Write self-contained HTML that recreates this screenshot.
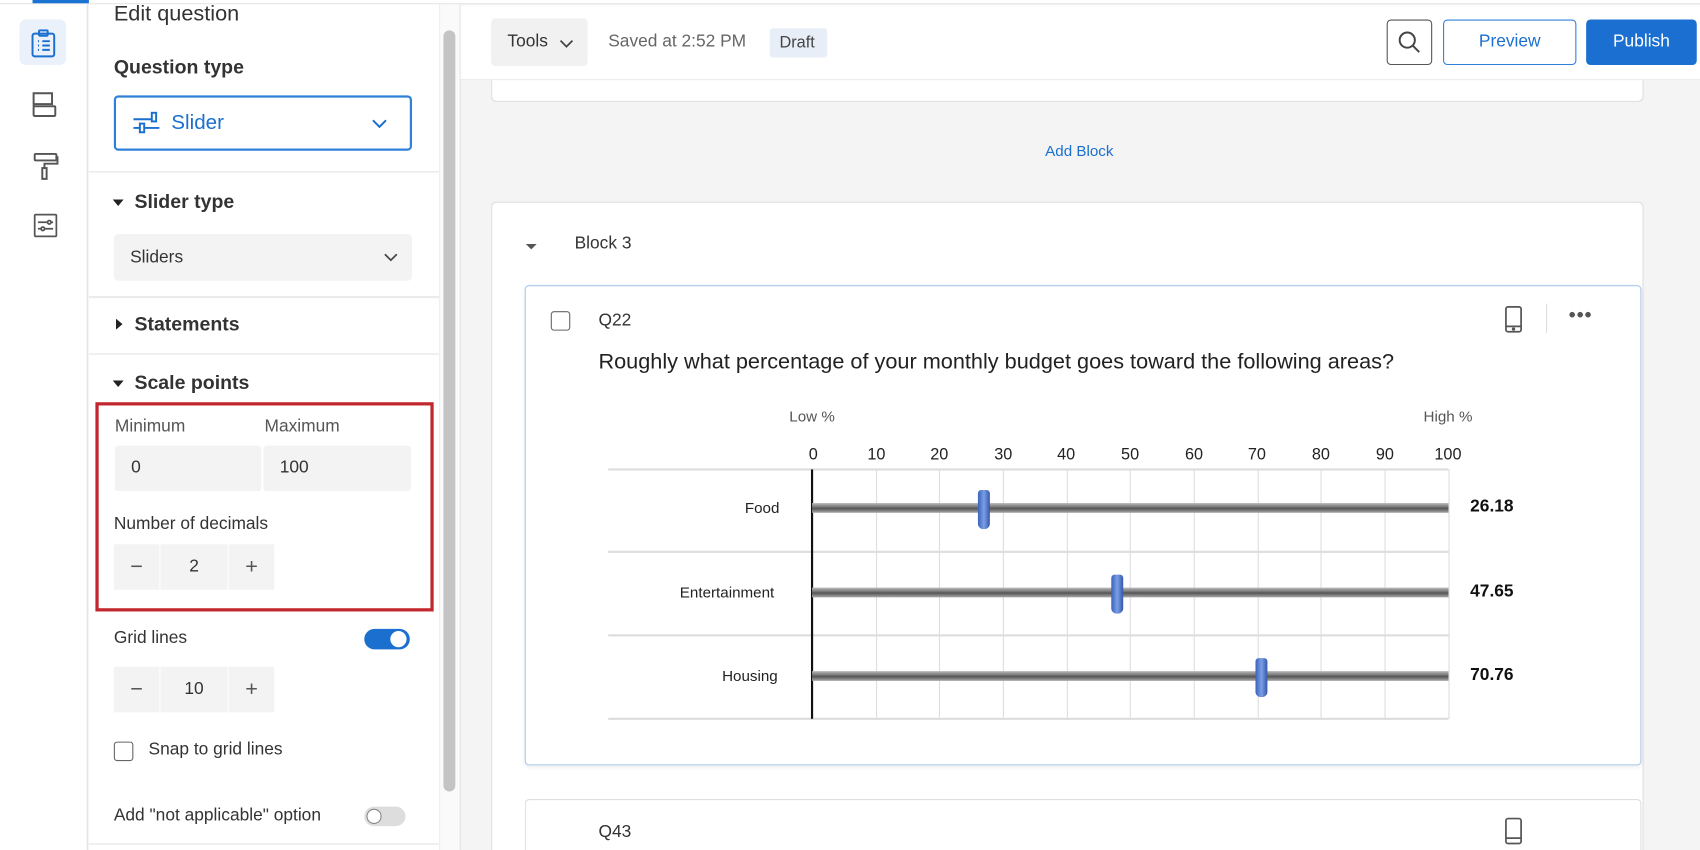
<!DOCTYPE html>
<html><head><meta charset="utf-8"><style>
*{box-sizing:border-box;margin:0;padding:0}
html,body{width:1700px;height:850px;overflow:hidden;background:#f4f4f4}
#w{position:absolute;left:0;top:0;width:1568px;height:784px;overflow:hidden;transform:scale(1.08418,1.08418);transform-origin:0 0;font-family:"Liberation Sans",sans-serif;color:#222;background:#f4f4f4}
.a{position:absolute}
.t{position:absolute;white-space:nowrap}
.b{font-weight:bold}
.gl{position:absolute;top:433px;height:230px;width:1px;background:#ddd}
.hl{position:absolute;left:561px;width:775px;height:2px;background:#ddd}
.bar{position:absolute;left:749px;width:587px;height:9px;background:linear-gradient(#bbb,#777 40%,#555 55%,#aaa);}
.th{position:absolute;width:11px;height:36px;border-radius:3px 3px 5px 5px;background:linear-gradient(90deg,#3a62b8,#7a9ee6 50%,#3458a8)}
.cell{position:absolute;background:#f3f3f3;height:42px;top:0;text-align:center;line-height:42px;font-size:16px;color:#333}
</style></head><body><div id="w">
<div class="a" style="left:0;top:0;width:1568px;height:4px;background:#fff;border-bottom:1px solid #e3e3e3"></div>
<div class="a" style="left:0;top:4px;width:81px;height:780px;background:#fff;border-right:1px solid #e0e0e0"></div>
<div class="a" style="left:30px;top:0;width:52px;height:3px;background:#1a73d1"></div>
<div class="a" style="left:18px;top:18px;width:43px;height:42px;border-radius:6px;background:#eaf1fb"></div>
<svg class="a" style="left:28px;top:27px" width="24" height="26" viewBox="0 0 24 26" fill="none" stroke="#1a6fcf" stroke-width="1.8"><rect x="2" y="4" width="20" height="21" rx="2"/><rect x="8" y="1" width="8" height="5" rx="1"/><path d="M7 11h1M11 11h7M7 15h1M11 15h7M7 19h1M11 19h7"/></svg>
<svg class="a" style="left:28px;top:83px" width="25" height="26" viewBox="0 0 25 26" fill="none" stroke="#555" stroke-width="1.8"><path d="M3 13V3h17v10H3"/><rect x="3" y="15" width="20" height="9" rx="1"/><path d="M3 13v2"/></svg>
<svg class="a" style="left:30px;top:140px" width="25" height="27" viewBox="0 0 25 27" fill="none" stroke="#555" stroke-width="1.8"><rect x="2" y="2" width="20" height="6" rx="1"/><path d="M22 5h1v6H11v4"/><rect x="9" y="15" width="4" height="10"/></svg>
<svg class="a" style="left:30px;top:196px" width="24" height="24" viewBox="0 0 24 24" fill="none" stroke="#555" stroke-width="1.6"><rect x="2" y="2" width="20" height="20" rx="1"/><path d="M5 9h9M17 9h2M5 15h3M11 15h8"/><circle cx="15.5" cy="9" r="1.6"/><circle cx="9.5" cy="15" r="1.6"/></svg>
<div class="a" style="left:82px;top:4px;width:323px;height:780px;background:#fff"></div>
<div class="t" style="left:105px;top:2px;font-size:20px;color:#333">Edit question</div>
<div class="t b" style="left:105px;top:52px;font-size:18px;color:#333">Question type</div>
<div class="a" style="left:105px;top:88px;width:275px;height:51px;border:2px solid #2f80d8;border-radius:4px"></div>
<svg class="a" style="left:123px;top:103px" width="25" height="22" viewBox="0 0 25 22" fill="none" stroke="#1a6fcf" stroke-width="1.8"><path d="M0 7h18M0 15h24"/><rect x="17" y="1" width="4" height="8" fill="#fff"/><rect x="6" y="11" width="4" height="8" fill="#fff"/></svg>
<div class="t" style="left:158px;top:103px;font-size:19px;color:#1a6fcf">Slider</div>
<svg class="a" style="left:343px;top:109px" width="14" height="10" viewBox="0 0 14 10" fill="none" stroke="#1a6fcf" stroke-width="1.8"><path d="M1 2l6 6 6-6"/></svg>
<div class="a" style="left:82px;top:158px;width:323px;height:1px;background:#e3e3e3"></div>
<div class="a" style="left:104px;top:184px;border:5px solid transparent;border-top:6px solid #222"></div>
<div class="t b" style="left:124px;top:176px;font-size:18px;color:#333">Slider type</div>
<div class="a" style="left:105px;top:216px;width:275px;height:43px;background:#f3f3f3;border-radius:4px"></div>
<div class="t" style="left:120px;top:229px;font-size:16px;color:#333">Sliders</div>
<svg class="a" style="left:354px;top:233px" width="13" height="9" viewBox="0 0 13 9" fill="none" stroke="#444" stroke-width="1.6"><path d="M1 1.5l5.5 5.5 5.5-5.5"/></svg>
<div class="a" style="left:82px;top:273px;width:323px;height:2px;background:#ebebeb"></div>
<div class="a" style="left:107px;top:294px;border:5px solid transparent;border-left:6px solid #222"></div>
<div class="t b" style="left:124px;top:289px;font-size:18px;color:#333">Statements</div>
<div class="a" style="left:82px;top:326px;width:323px;height:1px;background:#e3e3e3"></div>
<div class="a" style="left:104px;top:351px;border:5px solid transparent;border-top:6px solid #222"></div>
<div class="t b" style="left:124px;top:343px;font-size:18px;color:#333">Scale points</div>
<div class="a" style="left:88px;top:371px;width:312px;height:193px;border:3px solid #c1272d"></div>
<div class="t" style="left:106px;top:385px;font-size:16px;color:#555">Minimum</div>
<div class="t" style="left:244px;top:385px;font-size:16px;color:#555">Maximum</div>
<div class="a" style="left:106px;top:411px;width:135px;height:42px;background:#f3f3f3;border-radius:3px"></div>
<div class="a" style="left:243px;top:411px;width:136px;height:42px;background:#f3f3f3;border-radius:3px"></div>
<div class="t" style="left:121px;top:423px;font-size:16px;color:#333">0</div>
<div class="t" style="left:258px;top:423px;font-size:16px;color:#333">100</div>
<div class="t" style="left:105px;top:475px;font-size:16px;color:#333">Number of decimals</div>
<div class="a" style="left:105px;top:502px;width:148px;height:42px">
<div class="cell" style="left:0;width:42px;font-size:20px;color:#555">−</div><div class="cell" style="left:43px;width:62px">2</div><div class="cell" style="left:106px;width:42px;font-size:20px;color:#555">+</div></div>
<div class="t" style="left:105px;top:580px;font-size:16px;color:#333">Grid lines</div>
<div class="a" style="left:336px;top:580px;width:42px;height:19px;border-radius:10px;background:#1a6fcf"></div>
<div class="a" style="left:360px;top:582px;width:15px;height:15px;border-radius:50%;background:#fff"></div>
<div class="a" style="left:105px;top:615px;width:148px;height:42px">
<div class="cell" style="left:0;width:42px;font-size:20px;color:#555">−</div><div class="cell" style="left:43px;width:62px">10</div><div class="cell" style="left:106px;width:42px;font-size:20px;color:#555">+</div></div>
<div class="a" style="left:105px;top:684px;width:18px;height:18px;border:1.5px solid #666;border-radius:3px"></div>
<div class="t" style="left:137px;top:683px;font-size:16px;color:#333">Snap to grid lines</div>
<div class="t" style="left:105px;top:744px;font-size:16px;color:#333">Add "not applicable" option</div>
<div class="a" style="left:336px;top:744px;width:38px;height:18px;border-radius:9px;background:#ddd"></div>
<div class="a" style="left:338px;top:746px;width:14px;height:14px;border-radius:50%;background:#fff;border:1px solid #888"></div>
<div class="a" style="left:82px;top:778px;width:323px;height:1px;background:#e3e3e3"></div>
<div class="a" style="left:405px;top:4px;width:20px;height:780px;background:#fafafa;border-left:1px solid #eee;border-right:1px solid #e3e3e3"></div>
<div class="a" style="left:409px;top:28px;width:11px;height:702px;border-radius:6px;background:#c4c4c4"></div>
<div class="a" style="left:425px;top:5px;width:1143px;height:69px;background:#fff;border-bottom:1px solid #eaeaea"></div>
<div class="a" style="left:453px;top:17px;width:89px;height:44px;background:#f1f1f1;border-radius:4px"></div>
<div class="t" style="left:468px;top:30px;font-size:16px;color:#333">Tools</div>
<svg class="a" style="left:516px;top:36px" width="13" height="9" viewBox="0 0 13 9" fill="none" stroke="#444" stroke-width="1.6"><path d="M1 1.5l5.5 5.5 5.5-5.5"/></svg>
<div class="t" style="left:561px;top:30px;font-size:16px;color:#666">Saved at 2:52 PM</div>
<div class="a" style="left:710px;top:26px;width:53px;height:27px;background:#e8eef7;border-radius:3px"></div>
<div class="t" style="left:719px;top:31px;font-size:15px;color:#444">Draft</div>
<div class="a" style="left:1279px;top:18px;width:42px;height:42px;border:1.5px solid #555;border-radius:4px"></div>
<svg class="a" style="left:1288px;top:27px" width="24" height="24" viewBox="0 0 24 24" fill="none" stroke="#444" stroke-width="1.8"><circle cx="10" cy="10" r="7"/><path d="M15 15l6 6"/></svg>
<div class="a" style="left:1331px;top:18px;width:123px;height:42px;border:1.5px solid #2f80d8;border-radius:4px;text-align:center;line-height:40px;font-size:16px;color:#1a6fcf">Preview</div>
<div class="a" style="left:1463px;top:18px;width:102px;height:42px;background:#1a6fd1;border-radius:4px;text-align:center;line-height:42px;font-size:16px;color:#fff">Publish</div>
<div class="a" style="left:453px;top:74px;width:1063px;height:20px;background:#fff;border:1px solid #ddd;border-top:none;border-radius:0 0 5px 5px"></div>
<div class="t" style="left:964px;top:131px;font-size:14px;color:#1a6fcf">Add Block</div>
<div class="a" style="left:453px;top:186px;width:1063px;height:598px;background:#fff;border:1px solid #ddd;border-bottom:none;border-radius:5px 5px 0 0"></div>
<div class="a" style="left:485px;top:225px;border:5px solid transparent;border-top:5px solid #555"></div>
<div class="t" style="left:530px;top:216px;font-size:16px;color:#333">Block 3</div>
<div class="a" style="left:484px;top:263px;width:1030px;height:443px;border:1.5px solid #a9c8ec;border-radius:4px;box-shadow:0 1px 4px rgba(0,0,0,.08)"></div>
<div class="a" style="left:508px;top:287px;width:18px;height:18px;border:1.5px solid #666;border-radius:3px"></div>
<div class="t" style="left:552px;top:287px;font-size:16px;color:#333">Q22</div>
<svg class="a" style="left:1387px;top:282px" width="18" height="26" viewBox="0 0 18 26" fill="none" stroke="#555" stroke-width="1.6"><rect x="2" y="1" width="14" height="23" rx="2"/><path d="M2 19h14"/><circle cx="9" cy="21.5" r=".8" fill="#555"/></svg>
<div class="a" style="left:1426px;top:280px;width:1px;height:27px;background:#ddd"></div>
<div class="t b" style="left:1447px;top:280px;font-size:18px;color:#555;letter-spacing:1px">•••</div>
<div class="t" style="left:552px;top:323px;font-size:20px;color:#222">Roughly what percentage of your monthly budget goes toward the following areas?</div>
<div class="t" style="left:728px;top:376px;font-size:14px;color:#555">Low %</div>
<div class="t" style="left:1313px;top:376px;font-size:14px;color:#555">High %</div>
<div class="t" style="left:746px;top:411px;font-size:15px;color:#222">0</div>
<div class="t" style="left:800px;top:411px;font-size:15px;color:#222">10</div>
<div class="t" style="left:858px;top:411px;font-size:15px;color:#222">20</div>
<div class="t" style="left:917px;top:411px;font-size:15px;color:#222">30</div>
<div class="t" style="left:975px;top:411px;font-size:15px;color:#222">40</div>
<div class="t" style="left:1034px;top:411px;font-size:15px;color:#222">50</div>
<div class="t" style="left:1093px;top:411px;font-size:15px;color:#222">60</div>
<div class="t" style="left:1151px;top:411px;font-size:15px;color:#222">70</div>
<div class="t" style="left:1210px;top:411px;font-size:15px;color:#222">80</div>
<div class="t" style="left:1269px;top:411px;font-size:15px;color:#222">90</div>
<div class="t" style="left:1323px;top:411px;font-size:15px;color:#222">100</div>
<div class="gl" style="left:808px"></div><div class="gl" style="left:866px"></div><div class="gl" style="left:925px"></div><div class="gl" style="left:984px"></div><div class="gl" style="left:1042px"></div><div class="gl" style="left:1101px"></div><div class="gl" style="left:1160px"></div><div class="gl" style="left:1218px"></div><div class="gl" style="left:1277px"></div><div class="gl" style="left:1336px"></div>
<div class="hl" style="top:432px"></div><div class="hl" style="top:508px"></div><div class="hl" style="top:585px"></div><div class="hl" style="top:662px"></div>
<div class="a" style="left:748px;top:433px;width:2px;height:230px;background:#111"></div>
<div class="t" style="left:687px;top:460px;font-size:14px;color:#222">Food</div>
<div class="t" style="left:627px;top:538px;font-size:14px;color:#222">Entertainment</div>
<div class="t" style="left:666px;top:615px;font-size:14px;color:#222">Housing</div>
<div class="bar" style="top:464px"></div><div class="bar" style="top:542px"></div><div class="bar" style="top:619px"></div>
<div class="th" style="left:902px;top:452px"></div>
<div class="th" style="left:1025px;top:530px"></div>
<div class="th" style="left:1158px;top:607px"></div>
<div class="t b" style="left:1356px;top:459px;font-size:16px;color:#111">26.18</div>
<div class="t b" style="left:1356px;top:537px;font-size:16px;color:#111">47.65</div>
<div class="t b" style="left:1356px;top:614px;font-size:16px;color:#111">70.76</div>
<div class="a" style="left:484px;top:737px;width:1030px;height:47px;border:1px solid #ddd;border-bottom:none;border-radius:4px 4px 0 0;background:#fff"></div>
<div class="t" style="left:552px;top:759px;font-size:16px;color:#333">Q43</div>
<svg class="a" style="left:1387px;top:754px" width="18" height="26" viewBox="0 0 18 26" fill="none" stroke="#555" stroke-width="1.6"><rect x="2" y="1" width="14" height="23" rx="2"/><path d="M2 19h14"/></svg>
</div></body></html>
